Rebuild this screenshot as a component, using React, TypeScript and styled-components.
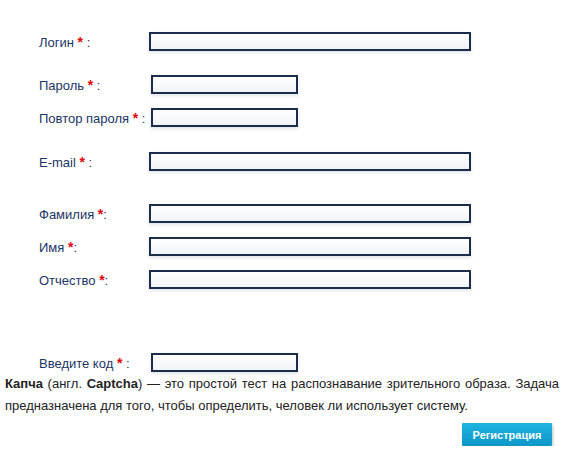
import React from "react";
import styled, { createGlobalStyle } from "styled-components";

const GlobalStyle = createGlobalStyle`
  body {
    margin: 0;
    background: #fff;
    font-family: "Liberation Sans", Arial, sans-serif;
  }
`;

const Page = styled.div({
  padding: '0 5px 0 5px',
  width: 554,
});

const Form = styled.form({
  display: 'flex',
  flexDirection: 'column',
  paddingLeft: 34,
});

const Row = styled.div<{ $mt: number }>`
  display: flex;
  align-items: center;
  height: 19px;
  margin-top: ${(p) => p.$mt}px;
`;

const Label = styled.label<{ $w: number }>`
  width: ${(p) => p.$w}px;
  flex-shrink: 0;
  white-space: nowrap;
  font-size: 13px;
  color: #1b3564;
`;

const Star = styled.span({
  color: '#e0000b',
  fontWeight: 'bold',
  fontSize: 14,
});

const Field = styled.input<{ $w: number }>`
  box-sizing: border-box;
  width: ${(p) => p.$w}px;
  height: 19px;
  margin: 0;
  padding: 0 4px;
  border: 2px solid #1c2d4c;
  background: linear-gradient(#ffffff, #f0f3f8);
  box-shadow: 0 2px 3px rgba(60, 80, 120, 0.15);
  outline: none;
`;

const Note = styled.p({
  margin: '1px 0 0 0',
  fontSize: 13,
  lineHeight: '22px',
  color: '#222',
  textAlign: 'justify',
});

const Footer = styled.div({
  display: 'flex',
  justifyContent: 'flex-end',
  paddingRight: 7,
  marginTop: 6,
});

const Button = styled.button({
  width: 90,
  height: 23,
  border: 'none',
  borderRadius: 1,
  background: 'linear-gradient(#1eb4e0, #0d97c9)',
  color: '#fff',
  fontFamily: '"Liberation Sans", Arial, sans-serif',
  fontSize: 11,
  fontWeight: 'bold',
  boxShadow: '1px 2px 3px rgba(0, 0, 0, 0.25)',
  padding: 0,
});

type FieldDef = { label: string; tail: string; mt: number; lw: number; fw: number; type?: string };

const fields: FieldDef[] = [
  { label: 'Логин', tail: ' :', mt: 32, lw: 110, fw: 322 },
  { label: 'Пароль', tail: ' :', mt: 24, lw: 112, fw: 147, type: 'password' },
  { label: 'Повтор пароля', tail: ' :', mt: 14, lw: 112, fw: 147, type: 'password' },
  { label: 'E-mail', tail: ' :', mt: 25, lw: 110, fw: 322 },
  { label: 'Фамилия', tail: ':', mt: 33, lw: 110, fw: 322 },
  { label: 'Имя', tail: ':', mt: 14, lw: 110, fw: 322 },
  { label: 'Отчество', tail: ':', mt: 14, lw: 110, fw: 322 },
  { label: 'Введите код', tail: ' :', mt: 64, lw: 112, fw: 147 },
];

export default function App() {
  return (
    <React.Fragment>
      <GlobalStyle />
      <Page>
        <Form onSubmit={(e) => e.preventDefault()}>
          {fields.map((f) => (
            <Row key={f.label} $mt={f.mt}>
              <Label $w={f.lw}>
                {f.label} <Star>*</Star>{f.tail}
              </Label>
              <Field $w={f.fw} type={f.type || 'text'} />
            </Row>
          ))}
        </Form>
        <Note>
          <b>Капча</b> (англ. <b>Captcha</b>) — это простой тест на распознавание зрительного образа. Задача
          предназначена для того, чтобы определить, человек ли использует систему.
        </Note>
        <Footer>
          <Button type="button">Регистрация</Button>
        </Footer>
      </Page>
    </React.Fragment>
  );
}
